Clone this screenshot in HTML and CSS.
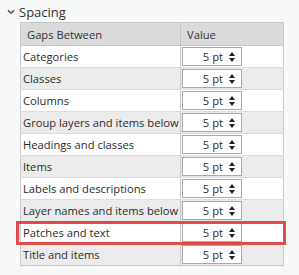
FILE: index.html
```html
<!DOCTYPE html>
<html lang="en">
<head>
    <meta charset="UTF-8">
    <title>Spacing</title>
    <link rel="stylesheet" href="styles.css">
</head>
<body>
    <div class="panel">
        <div class="section-head">
            <svg class="chevron" width="8" height="6" viewBox="0 0 8 6"><path d="M1 1.2 L4 4.2 L7 1.2" fill="none" stroke="#555" stroke-width="1.6"/></svg>
            <span class="section-title">Spacing</span>
        </div>

        <table class="gaps">
            <thead>
                <tr>
                    <th class="col-name">Gaps Between</th>
                    <th class="col-value">Value</th>
                </tr>
            </thead>
            <tbody>
                <tr><td class="name">Categories</td><td class="value"><div class="spin"><span class="num">5 pt</span><span class="arrows"></span></div></td></tr>
                <tr class="alt"><td class="name">Classes</td><td class="value"><div class="spin"><span class="num">5 pt</span><span class="arrows"></span></div></td></tr>
                <tr><td class="name">Columns</td><td class="value"><div class="spin"><span class="num">5 pt</span><span class="arrows"></span></div></td></tr>
                <tr class="alt"><td class="name">Group layers and items below</td><td class="value"><div class="spin"><span class="num">5 pt</span><span class="arrows"></span></div></td></tr>
                <tr><td class="name">Headings and classes</td><td class="value"><div class="spin"><span class="num">5 pt</span><span class="arrows"></span></div></td></tr>
                <tr class="alt"><td class="name">Items</td><td class="value"><div class="spin"><span class="num">5 pt</span><span class="arrows"></span></div></td></tr>
                <tr><td class="name">Labels and descriptions</td><td class="value"><div class="spin"><span class="num">5 pt</span><span class="arrows"></span></div></td></tr>
                <tr class="alt"><td class="name">Layer names and items below</td><td class="value"><div class="spin"><span class="num">5 pt</span><span class="arrows"></span></div></td></tr>
                <tr class="marked"><td class="name">Patches and text</td><td class="value"><div class="spin"><span class="num">5 pt</span><span class="arrows"></span></div></td></tr>
                <tr class="alt"><td class="name">Title and items</td><td class="value"><div class="spin"><span class="num">5 pt</span><span class="arrows"></span></div></td></tr>
            </tbody>
        </table>
    </div>
</body>
</html>
```

FILE: styles.css
```css
body {
    margin: 0;
    background: #f7f8f8;
    font-family: "Open Sans", "Noto Sans", sans-serif;
    color: #2b2b2b;
}

.panel {
    width: 299px;
    height: 275px;
    box-sizing: border-box;
    padding-top: 2px;
}

.section-head {
    display: flex;
    align-items: center;
    height: 20px;
    padding-left: 7px;
}

.chevron {
    margin-right: 4px;
}

.section-title {
    font-size: 13px;
    color: #333;
}

.gaps {
    margin-left: 20px;
    width: 264px;
    border-collapse: collapse;
    font-size: 11.2px;
    table-layout: fixed;
}

.gaps th {
    height: 22px;
    padding: 0 0 0 6px;
    background: #dadada;
    border: 1px solid #c6c6c6;
    font-weight: normal;
    text-align: left;
    color: #333;
}

.col-name {
    width: 153px;
}

.gaps td {
    height: 22px;
    padding: 0;
    border-left: 1px solid #c9c9c9;
    border-right: 1px solid #c9c9c9;
    border-bottom: 1px solid #dcdcdc;
    box-sizing: border-box;
    background: #fff;
}

.gaps tr.alt td {
    background: #ebebeb;
}

.gaps tbody tr:last-child td {
    border-bottom: 1px solid #c6c6c6;
}

.name {
    padding-left: 2px !important;
    white-space: nowrap;
    overflow: hidden;
}

.value {
    padding-left: 1px !important;
}

.spin {
    display: flex;
    align-items: center;
    justify-content: flex-end;
    width: 60px;
    height: 19px;
    box-sizing: border-box;
    border: 1px solid #a8a8a8;
    background: #fff;
    padding-right: 5px;
}

.num {
    margin-right: 6px;
}

.arrows {
    position: relative;
    width: 7px;
    height: 10px;
}

.arrows::before,
.arrows::after {
    content: "";
    position: absolute;
    left: 0;
    border-left: 3.5px solid transparent;
    border-right: 3.5px solid transparent;
}

.arrows::before {
    top: 0;
    border-bottom: 4px solid #222;
}

.arrows::after {
    bottom: 0;
    border-top: 4px solid #222;
}

/* highlight annotation over the row */
.gaps tr.marked td.name {
    position: relative;
    overflow: visible;
}

.gaps tr.marked td.name::after {
    content: "";
    position: absolute;
    left: -5px;
    top: -1px;
    width: 264px;
    height: 18px;
    border: 3px solid #e34b4b;
    pointer-events: none;
}
```
